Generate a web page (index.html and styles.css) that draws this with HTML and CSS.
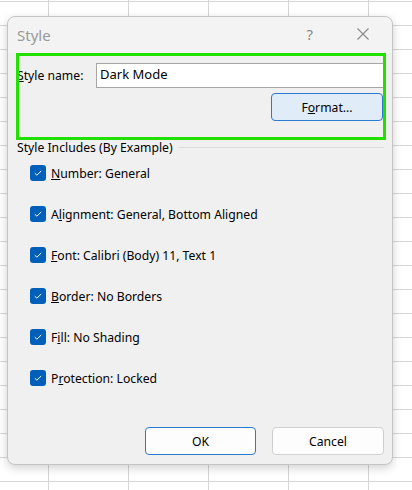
FILE: index.html
```html
<!DOCTYPE html>
<html>
<head>
<meta charset="utf-8">
<link rel="stylesheet" href="styles.css">
</head>
<body>
<div class="sheet">
  <div class="dialog">
    <div class="titlebar">
      <span class="title">Style</span>
      <span class="help">?</span>
      <svg class="close" width="12" height="12" viewBox="0 0 12 12"><path d="M0.5 0.5L11.5 11.5M11.5 0.5L0.5 11.5" stroke="#8a8a8a" stroke-width="1.1" fill="none"/></svg>
    </div>
    <div class="body">
      <div class="name-row">
        <span class="label"><u>S</u>tyle name:</span>
        <div class="input">Dark Mode</div>
      </div>
      <div class="format-row">
        <button class="btn btn-format">F<u>o</u>rmat...</button>
      </div>
      <div class="group-head">
        <span>Style Includes (By Example)</span>
        <div class="rule"></div>
      </div>
      <ul class="checks">
        <li><span class="cb"><svg width="16" height="16" viewBox="0 0 16 16"><path d="M4.8 8.2L6.9 10.2L11.2 6" stroke="#fff" stroke-width="1" fill="none"/></svg></span><span><u>N</u>umber: General</span></li>
        <li><span class="cb"><svg width="16" height="16" viewBox="0 0 16 16"><path d="M4.8 8.2L6.9 10.2L11.2 6" stroke="#fff" stroke-width="1" fill="none"/></svg></span><span>A<u>l</u>ignment: General, Bottom Aligned</span></li>
        <li><span class="cb"><svg width="16" height="16" viewBox="0 0 16 16"><path d="M4.8 8.2L6.9 10.2L11.2 6" stroke="#fff" stroke-width="1" fill="none"/></svg></span><span><u>F</u>ont: Calibri (Body) 11, Text 1</span></li>
        <li><span class="cb"><svg width="16" height="16" viewBox="0 0 16 16"><path d="M4.8 8.2L6.9 10.2L11.2 6" stroke="#fff" stroke-width="1" fill="none"/></svg></span><span><u>B</u>order: No Borders</span></li>
        <li><span class="cb"><svg width="16" height="16" viewBox="0 0 16 16"><path d="M4.8 8.2L6.9 10.2L11.2 6" stroke="#fff" stroke-width="1" fill="none"/></svg></span><span>F<u>i</u>ll: No Shading</span></li>
        <li><span class="cb"><svg width="16" height="16" viewBox="0 0 16 16"><path d="M4.8 8.2L6.9 10.2L11.2 6" stroke="#fff" stroke-width="1" fill="none"/></svg></span><span>P<u>r</u>otection: Locked</span></li>
      </ul>
      <div class="actions">
        <button class="btn btn-ok">OK</button>
        <button class="btn btn-cancel">Cancel</button>
      </div>
    </div>
    <div class="highlight"></div>
  </div>
</div>
</body>
</html>
```

FILE: styles.css
```css
html, body {
  margin: 0;
  padding: 0;
}
body {
  width: 412px;
  height: 490px;
  overflow: hidden;
  font-family: "Noto Sans", "Open Sans", sans-serif;
  font-size: 12.2px;
  color: #000;
}
.sheet {
  width: 412px;
  height: 490px;
  background-color: #fff;
  background-image:
    linear-gradient(to right, #d6d6d6 1px, transparent 1px),
    linear-gradient(to bottom, #d6d6d6 1px, transparent 1px);
  background-size: 80px 100%, 100% 24px;
  background-position: 48px 0, 0 1px;
  padding: 16px 0 0 7px;
  box-sizing: border-box;
}
.dialog {
  position: relative;
  width: 386px;
  height: 449px;
  box-sizing: border-box;
  background: #f0f0f0;
  border: 1px solid #c4c4c4;
  border-radius: 8px;
  box-shadow: 0 3px 10px rgba(0,0,0,0.18);
}
.titlebar {
  height: 36px;
  display: flex;
  align-items: center;
  padding-left: 9px;
  background: #f3f3f3;
  border-radius: 8px 8px 0 0;
}
.title {
  font-size: 15px;
  color: #9a9a9a;
  flex: 1;
  margin-top: -1px;
}
.help {
  font-size: 15px;
  color: #8a8a8a;
  margin-right: 44px;
  margin-top: -3px;
}
.close {
  margin-right: 23px;
  margin-top: -2px;
}
.body {
  padding: 0 8px 0 9px;
}
.name-row {
  display: flex;
  align-items: center;
  margin-top: 10px;
  height: 25px;
}
.label {
  width: 79px;
}
.input {
  flex: 1;
  height: 25px;
  box-sizing: border-box;
  background: #fff;
  border: 1px solid #a6a6a6;
  font-size: 13px;
  padding-left: 3px;
  line-height: 21px;
}
.format-row {
  display: flex;
  justify-content: flex-end;
  margin-top: 5px;
  padding-right: 1px;
}
.btn {
  font-family: inherit;
  font-size: 12.2px;
  color: #000;
  width: 112px;
  height: 28px;
  box-sizing: border-box;
  border-radius: 4px;
  padding: 0;
  background: #fdfdfd;
  border: 1px solid #d0d0d0;
}
.btn-format {
  background: #e0ecf8;
  border-color: #2a7ad0;
}
.group-head {
  display: flex;
  align-items: center;
  margin-top: 18px;
  height: 16px;
}
.rule {
  flex: 1;
  height: 1px;
  background: #dadada;
  margin-left: 6px;
  margin-top: 1px;
}
.checks {
  list-style: none;
  margin: 10px 0 0 0;
  padding: 0 0 0 13px;
  display: flex;
  flex-direction: column;
  gap: 25px;
}
.checks li {
  display: flex;
  align-items: center;
  height: 16px;
}
.checks li span:last-child {
  margin-top: 1px;
}
.cb {
  width: 16px;
  height: 16px;
  border-radius: 3px;
  background: #005fb8;
  margin-right: 5px;
  display: flex;
}
.actions {
  display: flex;
  justify-content: flex-end;
  gap: 16px;
  margin-top: 41px;
}
.btn-ok {
  width: 111px;
  border-color: #2a7ad0;
}
.highlight {
  position: absolute;
  left: 8px;
  top: 36px;
  width: 370px;
  height: 87px;
  box-sizing: border-box;
  border: 3px solid #22e000;
  pointer-events: none;
}
```
